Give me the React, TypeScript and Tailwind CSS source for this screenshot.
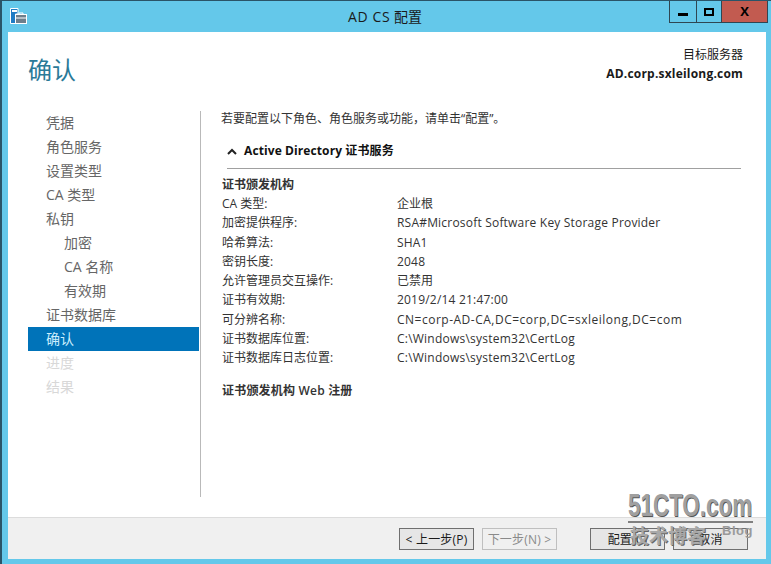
const FONT = "font-['Open_Sans','Noto_Sans_CJK_SC',sans-serif]";

const NAV: [string, number, string][] = [
  ["凭据", 0, "n"],
  ["角色服务", 0, "n"],
  ["设置类型", 0, "n"],
  ["CA 类型", 0, "n"],
  ["私钥", 0, "n"],
  ["加密", 1, "n"],
  ["CA 名称", 1, "n"],
  ["有效期", 1, "n"],
  ["证书数据库", 0, "n"],
  ["确认", 0, "a"],
  ["进度", 0, "d"],
  ["结果", 0, "d"],
];

const ROWS: [string, string, string][] = [
  ["CA 类型:", "企业根", "tracking-[0px]"],
  ["加密提供程序:", "RSA#Microsoft Software Key Storage Provider", "tracking-[0.2px]"],
  ["哈希算法:", "SHA1", "tracking-[0.2px]"],
  ["密钥长度:", "2048", "tracking-[0.2px]"],
  ["允许管理员交互操作:", "已禁用", "tracking-[0px]"],
  ["证书有效期:", "2019/2/14 21:47:00", "tracking-[0.2px]"],
  ["可分辨名称:", "CN=corp-AD-CA,DC=corp,DC=sxleilong,DC=com", "tracking-[0.5px]"],
  ["证书数据库位置:", "C:\\Windows\\system32\\CertLog", "tracking-[0.23px]"],
  ["证书数据库日志位置:", "C:\\Windows\\system32\\CertLog", "tracking-[0.23px]"],
];

function AppIcon() {
  return (
    <svg width="17" height="17" viewBox="0 0 17 17" className="block">
      <path d="M0.5 0.5H8V6H5.5V15.5H0.5Z" fill="#1f7cc4" stroke="#fff" />
      <rect x="2" y="2" width="5" height="2" fill="#fff" />
      <rect x="5.5" y="6.5" width="11" height="9" fill="#6d7f8c" stroke="#fff" />
      <path d="M9 6.5V5h4v1.5" fill="none" stroke="#fff" />
      <path d="M6 10h10" stroke="#fff" />
    </svg>
  );
}

function Btn({ label, disabled }: { label: string; disabled?: boolean }) {
  return (
    <div
      className={`w-[75px] h-[22px] pt-[1px] flex items-center justify-center text-[12px] tracking-[0.2px] border ${
        disabled ? "border-[#bfbfbf] text-[#8a8a8a] bg-[#f0f0f0]" : "border-[#6f6f6f] text-[#1a1a1a] bg-[#e6e6e6]"
      }`}
    >
      {label}
    </div>
  );
}

export default function App() {
  return (
    <div className={`${FONT} relative w-[771px] h-[564px] overflow-hidden bg-[#64c8ea] border-t border-l-2 border-[#2a5468] flex flex-col`}>
      <div className="h-[31px] flex items-center shrink-0 relative">
        <div className="pl-[8px]">
          <AppIcon />
        </div>
        <div className="absolute inset-x-0 top-[7px] text-center text-[14px] leading-[18px] text-[#1a1a1a] pr-[3px]">
          <span className="tracking-[0.6px]">AD CS</span> 配置
        </div>
        <div className="absolute right-[3px] top-0 flex h-[22px] border border-t-0 border-[#2f4652]">
          <div className="w-[27px] border-r border-[#2f4652] flex items-center justify-center">
            <div className="w-[10px] h-[3px] bg-black mt-[6px]" />
          </div>
          <div className="w-[25px] border-r border-[#2f4652] flex items-center justify-center">
            <div className="w-[10px] h-[8px] border-2 border-black" />
          </div>
          <div className="w-[45px] bg-[#c25b50] flex items-center justify-center text-[13px] font-bold text-black">X</div>
        </div>
      </div>

      <div className="ml-[6px] mr-[5px] h-[527px] bg-white flex flex-col">
        <div className="flex-1 flex flex-col min-h-0">
          <div className="flex justify-between h-[62px] shrink-0">
            <div className="pl-[20px] pt-[20px] text-[24px] leading-[36px] text-[#2a7a98]">确认</div>
            <div className="pr-[23px] pt-[14px] text-right text-[12px] leading-[18.5px] text-[#1a1a1a]">
              <div>目标服务器</div>
              <div className="font-bold tracking-[0.2px]">AD.corp.sxleilong.com</div>
            </div>
          </div>
          <div className="flex pt-[17px]">
            <div className="w-[193px] h-[386px] border-r border-[#b9b9b9] shrink-0 pl-[20px] pr-[1px]">
              {NAV.map(([t, indent, s]) => (
                <div
                  key={t}
                  className={`h-[24px] pb-[1px] flex items-center text-[14px] ${indent ? "pl-[36px]" : "pl-[18px]"} ${
                    s === "a" ? "bg-[#0073b9] text-[#cdeefc]" : s === "d" ? "text-[#d8d8d8]" : "text-[#666666]"
                  }`}
                >
                  {t}
                </div>
              ))}
            </div>
            <div className="flex-1 pl-[20px] pr-[25px] text-[12px] text-[#333333]">
              <div className="leading-[18px] -mt-[1px]">若要配置以下角色、角色服务或功能，请单击“配置”。</div>
              <div className="flex items-center h-[20px] mt-[13px] pl-[6px] text-[#111111] font-bold">
                <svg width="10" height="7" viewBox="0 0 10 7" className="mr-[7px]">
                  <path d="M1 6L5 2L9 6" fill="none" stroke="#222" strokeWidth="2" />
                </svg>
                <span className="tracking-[0.1px]">Active Directory 证书服务</span>
              </div>
              <div className="h-px bg-[#a0a0a0] mt-[7px] ml-[6px]" />
              <div className="mt-[6px] ml-[1px] font-semibold leading-[19px]">证书颁发机构</div>
              {ROWS.map(([k, v, tr]) => (
                <div key={k} className="flex h-[19.25px] leading-[19px] ml-[1px]">
                  <div className="w-[175px] shrink-0">{k}</div>
                  <div className={tr}>{v}</div>
                </div>
              ))}
              <div className="mt-[14px] ml-[1px] font-semibold leading-[19px] tracking-[0.2px]">证书颁发机构 Web 注册</div>
            </div>
          </div>
        </div>
        <div className="h-[42px] shrink-0 bg-[#f0f0f0] border-t border-[#dcdcdc] flex items-start pt-[10px] pl-[391px]">
          <Btn label="< 上一步(P)" />
          <div className="ml-[8px]"><Btn label="下一步(N) >" disabled /></div>
          <div className="ml-[33px]"><Btn label="配置(C)" /></div>
          <div className="ml-[8px]"><Btn label="取消" /></div>
        </div>
      </div>

      <div className="absolute left-[626px] top-[489px] w-[125px] h-[60px] font-['Liberation_Sans','Noto_Sans_CJK_SC',sans-serif]">
        <div className="text-[32px] leading-[30px] font-bold text-[#a0a0a0] [text-shadow:1px_1px_0_#555] scale-x-[0.7] origin-left whitespace-nowrap">51CTO.com</div>
        <div className="h-[2px] bg-[#808080] mt-[1px]" />
        <div className="flex mt-[2px] pl-[2px]">
          <span className="text-[19px] leading-[24px] font-bold text-[#a8a8a8] [text-shadow:1px_1px_0_#666] whitespace-nowrap">技术博客</span>
          <span className="absolute right-0 top-[34px] text-[13px] leading-[14px] font-bold text-[#9a9a9a] tracking-[0.5px]">Blog</span>
        </div>
      </div>
    </div>
  );
}
